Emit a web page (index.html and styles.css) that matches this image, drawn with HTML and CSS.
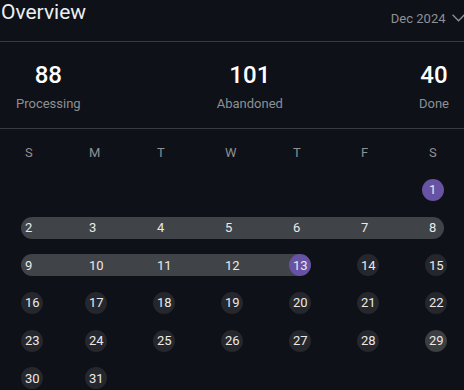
FILE: index.html
```html
<!DOCTYPE html>
<html lang="en">
<head>
<meta charset="utf-8">
<title>Overview</title>
<link rel="stylesheet" href="styles.css">
</head>
<body>
<div class="page">
  <header class="head">
    <h1 class="title">Overview</h1>
    <div class="month">
      <span>Dec 2024</span>
      <svg class="chev" width="13" height="8" viewBox="0 0 13 8"><polyline points="0.6,0.8 6.5,6.8 12.4,0.8" fill="none" stroke="#8d9095" stroke-width="1.3"/></svg>
    </div>
  </header>
  <section class="stats">
    <div class="stat"><div class="val">88</div><div class="lbl">Processing</div></div>
    <div class="stat"><div class="val">101</div><div class="lbl">Abandoned</div></div>
    <div class="stat"><div class="val">40</div><div class="lbl">Done</div></div>
  </section>
  <section class="cal">
    <div class="wd">S</div><div class="wd">M</div><div class="wd">T</div><div class="wd">W</div><div class="wd">T</div><div class="wd">F</div><div class="wd">S</div>

    <div class="d"></div><div class="d"></div><div class="d"></div><div class="d"></div><div class="d"></div><div class="d"></div>
    <div class="d"><span class="n c sel">1</span></div>

    <div class="d r rs"><span class="n">2</span></div>
    <div class="d r"><span class="n">3</span></div>
    <div class="d r"><span class="n">4</span></div>
    <div class="d r"><span class="n">5</span></div>
    <div class="d r"><span class="n">6</span></div>
    <div class="d r"><span class="n">7</span></div>
    <div class="d r re"><span class="n">8</span></div>

    <div class="d r rs"><span class="n">9</span></div>
    <div class="d r"><span class="n">10</span></div>
    <div class="d r"><span class="n">11</span></div>
    <div class="d r"><span class="n">12</span></div>
    <div class="d r rc"><span class="n c sel">13</span></div>
    <div class="d"><span class="n c">14</span></div>
    <div class="d"><span class="n c">15</span></div>

    <div class="d"><span class="n c">16</span></div>
    <div class="d"><span class="n c">17</span></div>
    <div class="d"><span class="n c">18</span></div>
    <div class="d"><span class="n c">19</span></div>
    <div class="d"><span class="n c">20</span></div>
    <div class="d"><span class="n c">21</span></div>
    <div class="d"><span class="n c">22</span></div>

    <div class="d"><span class="n c">23</span></div>
    <div class="d"><span class="n c">24</span></div>
    <div class="d"><span class="n c">25</span></div>
    <div class="d"><span class="n c">26</span></div>
    <div class="d"><span class="n c">27</span></div>
    <div class="d"><span class="n c">28</span></div>
    <div class="d"><span class="n c hov">29</span></div>

    <div class="d"><span class="n c">30</span></div>
    <div class="d"><span class="n c">31</span></div>
  </section>
</div>
</body>
</html>
```

FILE: styles.css
```css
html, body {
  margin: 0;
  padding: 0;
  background: #0e1117;
  overflow: hidden;
}
body {
  font-family: Roboto, "Liberation Sans", sans-serif;
  color: #e9eaec;
}
.page {
  width: 464px;
  height: 390px;
  overflow: hidden;
}
.head {
  display: flex;
  justify-content: space-between;
  align-items: flex-start;
  height: 41px;
  padding-left: 1px;
  border-bottom: 1px solid #383b40;
}
.title {
  margin: 0;
  font-size: 21px;
  font-weight: 400;
  line-height: normal;
  color: #eceef0;
}
.month {
  display: flex;
  align-items: center;
  gap: 6.5px;
  margin-top: 10.6px;
  margin-right: -1px;
  font-size: 13px;
  color: #8d9095;
}
.chev {
  display: block;
}
.stats {
  display: flex;
  justify-content: space-between;
  padding: 18.5px 15px 17px 16px;
  border-bottom: 1px solid #383b40;
}
.stat {
  text-align: center;
}
.val {
  font-size: 24px;
  font-weight: 500;
  line-height: normal;
  color: #ffffff;
}
.lbl {
  margin-top: 7px;
  font-size: 13px;
  line-height: normal;
  color: #8d9095;
}
.cal {
  display: grid;
  grid-template-columns: 64px repeat(5, 68px) 1fr;
  grid-auto-rows: 37.7px;
  padding: 4.9px 0 0 25px;
}
.wd {
  align-self: center;
  font-size: 13px;
  line-height: 15px;
  color: #8d9095;
}
.d {
  position: relative;
  display: flex;
  align-items: center;
}
.n {
  position: relative;
  z-index: 1;
  font-size: 13px;
  line-height: 15px;
  color: #e9eaec;
}
.n.c::before {
  content: "";
  position: absolute;
  left: 50%;
  top: 50%;
  width: 22px;
  height: 22px;
  border-radius: 50%;
  transform: translate(-50%, -50%);
  background: #25272c;
  z-index: -1;
}
.n.c.sel::before {
  background: #6752a4;
}
.n.c.hov::before {
  background: #3c3e42;
}
.d.r::before {
  content: "";
  position: absolute;
  left: 0;
  right: 0;
  top: 50%;
  height: 22px;
  margin-top: -11px;
  background: #404347;
}
.d.rs::before {
  left: -4px;
  border-radius: 11px 0 0 11px;
}
.d.re::before {
  right: auto;
  width: 15px;
  border-radius: 0 11px 11px 0;
}
.d.rc::before {
  right: auto;
  width: 8px;
}
```
